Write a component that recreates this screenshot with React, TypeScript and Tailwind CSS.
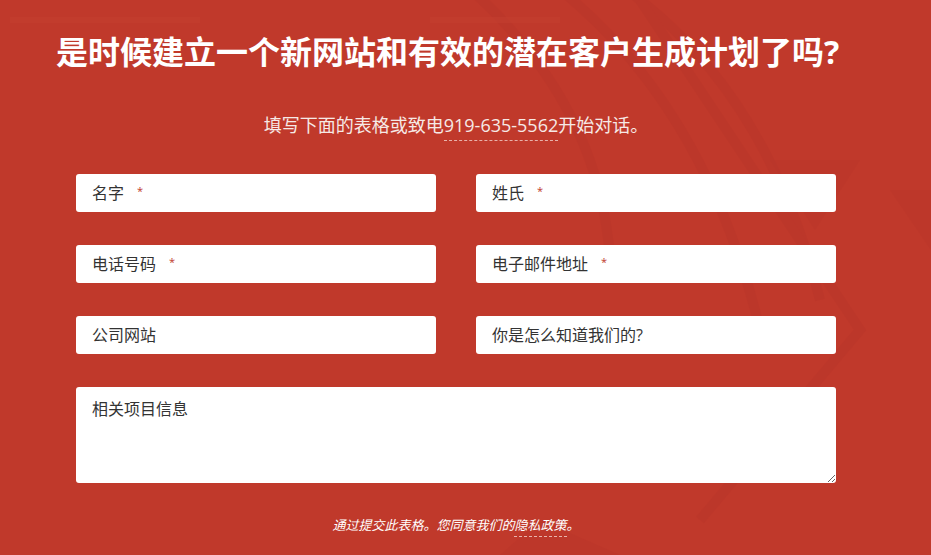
import React from "react";

const Field: React.FC<{ label: string; required?: boolean }> = ({ label, required }) => (
  <div className="h-[38px] bg-white rounded-[3px] flex items-center px-4 text-[16px] text-[#333]">
    <span>{label}</span>
    {required && <span className="ml-[13px] text-[11px] text-[#c0392b] -mt-1">*</span>}
  </div>
);

const App: React.FC = () => {
  return (
    <div
      className="relative w-[931px] h-[555px] overflow-hidden bg-[#c0392b]"
      style={{ fontFamily: '"Open Sans", "Noto Sans CJK SC", sans-serif' }}
    >
      {/* faint background pattern */}
      <svg className="absolute inset-0 pointer-events-none" width="931" height="555" viewBox="0 0 931 555">
        <g fill="none" stroke="#b9352a" strokeWidth="10" opacity="0.45">
          <path d="M520 -40 Q700 80 760 330" />
          <path d="M580 -40 Q760 60 820 300" />
          <path d="M460 -20 Q600 100 610 260" />
          <path d="M640 0 L860 330 L700 520" />
        </g>
        <g fill="#b9352a" opacity="0.4">
          <polygon points="770,160 860,160 815,230" />
          <polygon points="890,190 931,190 931,250" />
          <polygon points="540,520 620,555 500,555" />
        </g>
        <g fill="none" stroke="#c4402f" strokeWidth="6" opacity="0.5">
          <path d="M10 20 L200 20" />
          <path d="M430 20 L560 20" />
        </g>
      </svg>

      <div className="relative ml-[56px] w-[800px] pt-[29px]">
        <h1 className="text-white font-bold text-[32px] leading-[46px] whitespace-nowrap">
          是时候建立一个新网站和有效的潜在客户生成计划了吗?
        </h1>

        <p className="mt-[38px] text-center text-[18px] leading-[24px] text-[#f6e9e6]">
          填写下面的表格或致电
          <span className="border-b border-dashed border-[#e8b3ab] pb-[3px]">919-635-5562</span>
          开始对话。
        </p>

        <form className="px-5 mt-[37px]">
          <div className="grid grid-cols-2 gap-x-10 gap-y-[33px]">
            <Field label="名字" required />
            <Field label="姓氏" required />
            <Field label="电话号码" required />
            <Field label="电子邮件地址" required />
            <Field label="公司网站" />
            <Field label="你是怎么知道我们的?" />
          </div>
          <textarea
            placeholder="相关项目信息"
            className="mt-[33px] block w-full h-[96px] bg-white rounded-[3px] px-4 py-[10px] text-[16px] text-[#333] placeholder:text-[#333] outline-none"
          />
        </form>

        <p className="mt-[33px] text-center text-[13px] italic text-white">
          通过提交此表格。您同意我们的
          <span className="border-b border-dashed border-[#e8b3ab] pb-[2px]">隐私政策</span>。
        </p>
      </div>
    </div>
  );
};

export default App;
